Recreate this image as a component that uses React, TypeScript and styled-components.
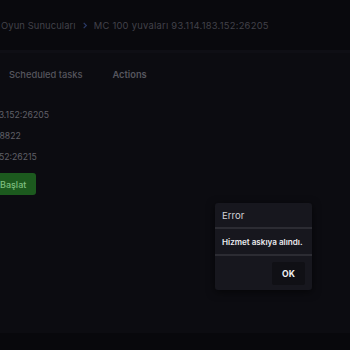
import styled, { createGlobalStyle } from 'styled-components'

const GlobalStyle = createGlobalStyle`
  html, body {
    margin: 0;
    padding: 0;
    background: #0c0c11;
  }
  body {
    font-family: Inter, 'Open Sans', sans-serif;
    overflow: hidden;
  }
`

const Page = styled.div`
  width: 350px;
  height: 350px;
  display: flex;
  flex-direction: column;
  background: #0c0c11;
  position: relative;
  overflow: hidden;
`

const Header = styled.header`
  height: 50px;
  display: flex;
  align-items: center;
  gap: 6px;
  padding-left: 1px;
  background: #09090d;
  border-bottom: 3px solid #0f0f15;
  font-size: 9.4px;
  color: #42424a;
  white-space: nowrap;
`

const Crumb = styled.span<{ $wide?: boolean }>`
  letter-spacing: ${(p) => (p.$wide ? '0.25px' : '0.1px')};
`

const Chevron = styled.svg`
  width: 6px;
  height: 7px;
`

const Tabs = styled.nav`
  display: flex;
  gap: 30px;
  padding: 16px 0 0 9px;
  height: 28px;
  font-size: 9.3px;
  font-weight: 500;
  color: #56565e;
`

const Tab = styled.span<{ $bold?: boolean }>`
  font-weight: ${(p) => (p.$bold ? 600 : 500)};
`

const Body = styled.section`
  flex: 1;
  display: flex;
  flex-direction: column;
  padding-top: 13px;
  margin-left: -77px;
`

const InfoLine = styled.div`
  height: 21px;
  font-size: 8.7px;
  color: #606068;
  white-space: nowrap;
`

const StartButton = styled.button`
  align-self: flex-start;
  margin-left: 70px;
  height: 22px;
  padding: 0 10px 0 7px;
  border: none;
  border-radius: 3px;
  background: #1c5a1e;
  color: #7fbf80;
  font-family: inherit;
  font-size: 9px;
  font-weight: 500;
`

const Footer = styled.div`
  height: 17px;
  background: #08080c;
`

const Overlay = styled.div`
  position: absolute;
  inset: 0;
  display: flex;
  justify-content: flex-end;
  align-items: flex-start;
  padding: 203px 38px 0 0;
  pointer-events: none;
`

const Dialog = styled.div`
  width: 97px;
  background: #17171e;
  border-radius: 3px;
  box-shadow: 0 2px 8px rgba(0, 0, 0, 0.6);
  display: flex;
  flex-direction: column;
`

const DialogTitle = styled.div`
  height: 24px;
  padding: 0 7px;
  font-size: 9.6px;
  color: #d2d2d6;
  border-bottom: 2px solid #2c2c33;
  display: flex;
  align-items: center;
`

const DialogText = styled.div`
  height: 25px;
  padding: 0 7px;
  font-size: 8.1px;
  font-weight: 600;
  color: #ececf0;
  border-bottom: 2px solid #2c2c33;
  display: flex;
  align-items: center;
  white-space: nowrap;
`

const DialogActions = styled.div`
  display: flex;
  justify-content: flex-end;
  padding: 6px 7px 5px;
`

const OkButton = styled.button`
  width: 33px;
  height: 23px;
  border: none;
  border-radius: 2px;
  background: #101015;
  color: #f2f2f4;
  font-family: inherit;
  font-size: 8.6px;
  font-weight: 700;
`

const App = () => {
  return (
    <Page>
      <GlobalStyle />
      <Header>
        <Crumb>Oyun Sunucuları</Crumb>
        <Chevron viewBox='0 0 6 8'>
          <path d='M1.5 1 L4.5 4 L1.5 7' fill='none' stroke='#2a3a66' strokeWidth='1.4' />
        </Chevron>
        <Crumb $wide>MC 100 yuvaları 93.114.183.152:26205</Crumb>
      </Header>
      <Tabs>
        <Tab>Scheduled tasks</Tab>
        <Tab $bold>Actions</Tab>
      </Tabs>
      <Body>
        <InfoLine>IP adresi: 93.114.183.152:26205</InfoLine>
        <InfoLine>Ana sorgu portu: 28822</InfoLine>
        <InfoLine>RCON: 93.114.183.152:26215</InfoLine>
        <StartButton>Başlat</StartButton>
      </Body>
      <Footer />
      <Overlay>
        <Dialog>
          <DialogTitle>Error</DialogTitle>
          <DialogText>Hizmet askıya alındı.</DialogText>
          <DialogActions>
            <OkButton>OK</OkButton>
          </DialogActions>
        </Dialog>
      </Overlay>
    </Page>
  )
}

export default App
